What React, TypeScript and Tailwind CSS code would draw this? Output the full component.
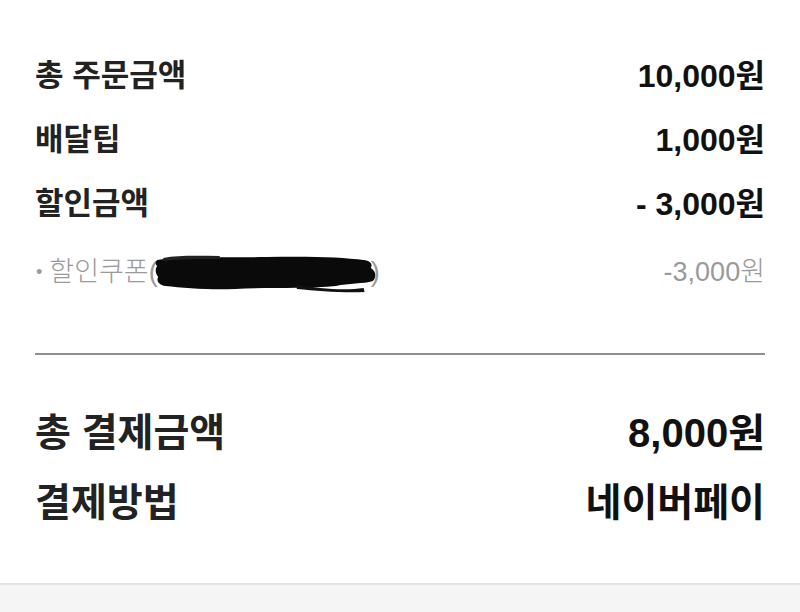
import React from 'react';

const FONT = '"Liberation Sans", "Noto Sans CJK KR", sans-serif';

const summaryRows = [
  { label: '총 주문금액', value: '10,000원' },
  { label: '배달팁', value: '1,000원' },
  { label: '할인금액', value: '- 3,000원' },
];

function Redaction() {
  // scribbled-out coupon name
  return (
    <svg width="226" height="40" viewBox="0 0 220 40" preserveAspectRatio="none" className="-ml-[5px] -mr-[8px] shrink-0">
      <path
        d="M4 7 C30 3 70 5 110 4 C150 3 185 4 205 7 C212 8 214 11 212 15 C217 18 218 24 214 28 C205 31 190 30 178 33 C150 36 110 34 80 36 C55 37 30 35 12 33 C6 32 3 28 5 24 C2 20 2 16 4 13 C2 11 2 9 4 7 Z"
        fill="#0a0a0a"
      />
      <path d="M140 32 C160 35 185 38 205 35 L206 39 C185 40 160 38 140 36 Z" fill="#111" />
      <path d="M10 5 C25 2 45 3 65 3 L65 6 C45 6 25 6 10 8 Z" fill="#222" />
    </svg>
  );
}

export default function App() {
  return (
    <div className="w-[800px] h-[612px] bg-white flex flex-col" style={{ fontFamily: FONT }}>
      <div className="flex-1 px-[35px] pt-[44px]">
        {summaryRows.map((row) => (
          <div key={row.label} className="h-[64px] flex items-center justify-between">
            <span className="text-[31px] font-bold text-[#222]">{row.label}</span>
            <span className="text-[32px] font-bold text-[#111]">{row.value}</span>
          </div>
        ))}

        <div className="h-[64px] pt-[9px] flex items-center justify-between text-[#9a9a9a]">
          <span className="flex items-center text-[27px] font-light">
            <span className="text-[18px] mr-[7px] ml-[1px]">•</span>
            <span>할인쿠폰(</span>
            <Redaction />
            <span>)</span>
          </span>
          <span className="text-[27px] font-light">-3,000원</span>
        </div>

        <div className="mt-[53px] h-[2px] bg-[#8f8f8f]" />

        <div className="pt-[43px]">
          <div className="h-[70px] flex items-center justify-between">
            <span className="text-[39px] font-bold text-[#222]">총 결제금액</span>
            <span className="text-[40px] font-bold text-[#111]">8,000원</span>
          </div>
          <div className="h-[70px] flex items-center justify-between">
            <span className="text-[39px] font-bold text-[#222]">결제방법</span>
            <span className="text-[39px] font-bold text-[#111]">네이버페이</span>
          </div>
        </div>
      </div>
      <div className="h-[29px] border-t-2 border-[#e2e2e2] bg-[#f5f5f5]" />
    </div>
  );
}
